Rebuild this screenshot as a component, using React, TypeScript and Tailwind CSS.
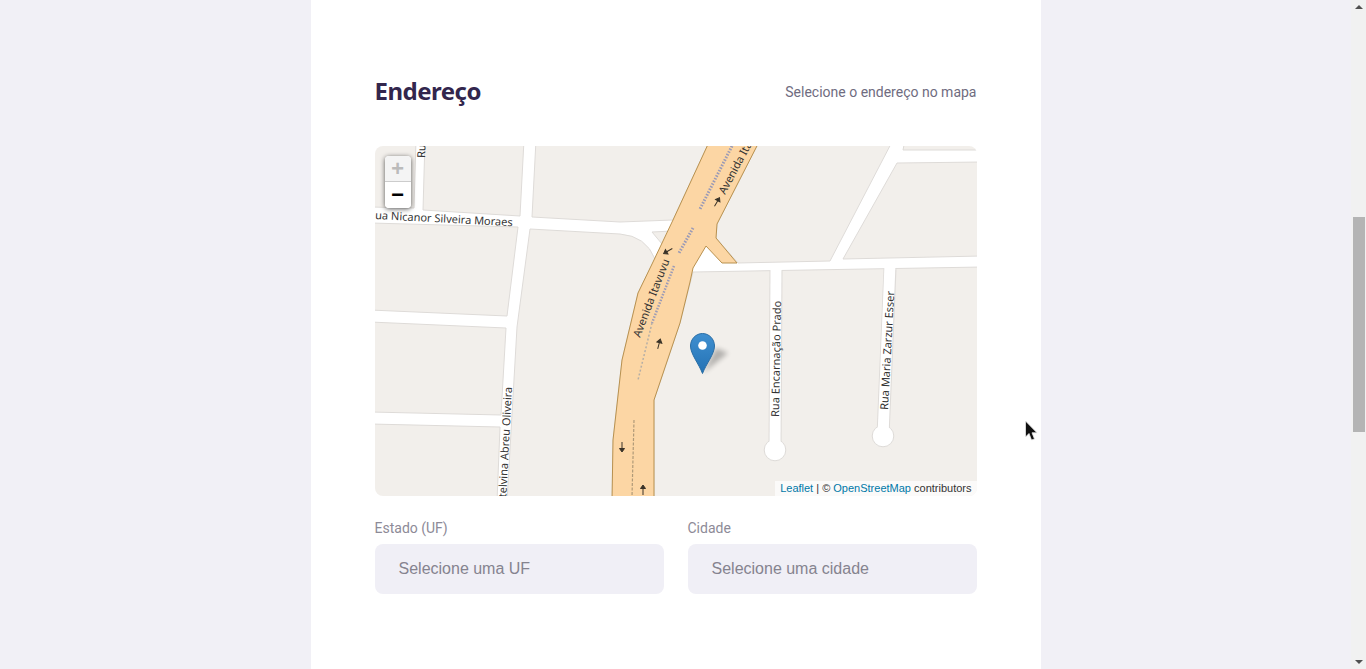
const BLOCKS = [
  '370,140 416,140 414,208 370,207',
  '425,140 524,140 520,216 423,210',
  '370,223 518,227 507,316 370,310',
  '370,322 506,328 501,415 370,412',
  '370,424 500,427 497,502 370,502',
  '536,140 710,140 673,220 620,222 532,217',
  '760,140 893,140 830,261 738,263 716,238 717,224',
  '905,140 982,140 982,150 903,150',
  '897,163 982,162 982,256 843,259',
];

const LABELS = [
  { text: 'Ru', x: 425, y: 158, rotate: -88, anchor: 'start' },
  { text: 'ua Nicanor Silveira Moraes', x: 375, y: 219, rotate: 3, anchor: 'start' },
  { text: 'Avenida Itavuvu', x: 640, y: 338, rotate: -69, anchor: 'start' },
  { text: 'Avenida Itavuvu', x: 725, y: 195, rotate: -62, anchor: 'start' },
  { text: 'telvina Abreu Oliveira', x: 512, y: 387, rotate: -87, anchor: 'end' },
  { text: 'Rua Encarnação Prado', x: 779, y: 417, rotate: -89, anchor: 'start' },
  { text: 'Rua Maria Zarzur Esser', x: 888, y: 410, rotate: -87, anchor: 'start' },
];

const ARROWS = [
  { x: 622, y: 447, rotate: 180 },
  { x: 643, y: 490, rotate: 0 },
  { x: 659, y: 344, rotate: 15 },
  { x: 717, y: 202, rotate: 30 },
  { x: 668, y: 251, rotate: 240 },
];

function StreetMap() {
  return (
    <svg viewBox="375 146 602 350" className="block w-full h-full bg-white">
      <defs>
        <linearGradient id="pin" x1="0" y1="0" x2="0" y2="1">
          <stop offset="0" stopColor="#3f8fd0" />
          <stop offset="1" stopColor="#2472b4" />
        </linearGradient>
        <filter id="blur" x="-60%" y="-60%" width="220%" height="220%">
          <feGaussianBlur stdDeviation="2.6" />
        </filter>
      </defs>

      {BLOCKS.map(points => (
        <polygon key={points} points={points} fill="#f2efeb" stroke="#dedbd8" strokeWidth="1" />
      ))}

      {/* big block west of the avenue */}
      <path
        d="M530 229 L620 234 Q646 236 655 259 L638 293 L622 360 L613 440 L612 502 L507 502 L517 327 Z"
        fill="#f2efeb"
        stroke="#dedbd8"
      />

      {/* big block east of the avenue, with the two dead ends */}
      <polygon points="693,272 982,267 982,502 654,502 654,400 680,323" fill="#f2efeb" stroke="#dedbd8" />
      <path d="M776 271 L775 450" stroke="#dedbd8" strokeWidth="13" fill="none" />
      <path d="M890 269 L883 436" stroke="#dedbd8" strokeWidth="13" fill="none" />
      <circle cx="775" cy="450" r="10.8" fill="white" stroke="#dedbd8" />
      <circle cx="883" cy="436" r="10.8" fill="white" stroke="#dedbd8" />
      <path d="M776 266 L775 450" stroke="white" strokeWidth="11" fill="none" />
      <path d="M890 264 L883 436" stroke="white" strokeWidth="11" fill="none" />

      {/* avenue */}
      <polygon points="652,232 673,231 662,244" fill="#f2efeb" stroke="#dedbd8" />
      <polygon
        points="710,140 673,220 653,262 638,293 622,360 613,440 612,502 654,502 654,400 680,323 690,282 693,268 706,246 722,263 737,263 716,238 717,224 760,140"
        fill="#fcd6a4"
        stroke="#b8914f"
        strokeWidth="1"
      />
      <path d="M732 146 L700 209" stroke="#9a9ab6" strokeWidth="3" strokeDasharray="1.5 1.5" fill="none" />
      <path d="M693 228 L679 253" stroke="#9a9ab6" strokeWidth="3" strokeDasharray="1.5 1.5" fill="none" />
      <path d="M674 266 L652 323" stroke="#9a9ab6" strokeWidth="2.5" strokeDasharray="1.5 1.5" fill="none" />
      <path d="M652 323 L638 380" stroke="#b5aea6" strokeWidth="1.5" strokeDasharray="2 2" fill="none" />
      <path d="M634 420 L632 496" stroke="#b09a78" strokeWidth="1.2" strokeDasharray="3 1.5" fill="none" />

      {ARROWS.map(a => (
        <path
          key={a.x}
          d="M0 5 L0 -3 M-2.5 -1.5 L0 -5 L2.5 -1.5 Z"
          transform={`translate(${a.x} ${a.y}) rotate(${a.rotate})`}
          stroke="#3a3328"
          strokeWidth="1"
          fill="#3a3328"
        />
      ))}

      {LABELS.map(l => (
        <text
          key={l.x}
          x={l.x}
          y={l.y}
          textAnchor={l.anchor as 'start' | 'end'}
          transform={`rotate(${l.rotate} ${l.x} ${l.y})`}
          fontFamily="'Noto Sans', sans-serif"
          fontSize="11"
          fill="#333"
        >
          {l.text}
        </text>
      ))}

      {/* marker */}
      <polygon points="703,373 716,348 728,353" fill="#000" opacity="0.26" filter="url(#blur)" />
      <path
        d="M702.5 373.5 C699 364 690.5 354 690.5 346 C690.5 339 696 333.5 702.5 333.5 C709 333.5 714.5 339 714.5 346 C714.5 354 706 364 702.5 373.5 Z"
        fill="url(#pin)"
        stroke="#2a6ea6"
        strokeWidth="1"
      />
      <circle cx="702.5" cy="345.5" r="4.3" fill="white" />
    </svg>
  );
}

function ZoomControl() {
  return (
    <div className="absolute left-[10px] top-[10px] w-[26px] rounded-[4px] bg-white shadow-[0_1px_5px_rgba(0,0,0,0.65)] overflow-hidden font-['Liberation_Mono',monospace] font-bold text-[22px] text-center">
      <div className="h-[26px] leading-[30px] bg-[#f4f4f4] text-[#bbbbbb] border-b border-[#cccccc]">+</div>
      <div className="h-[26px] leading-[30px] bg-white text-black">−</div>
    </div>
  );
}

function Field({ label, placeholder }: { label: string; placeholder: string }) {
  return (
    <div className="flex flex-col">
      <span className="h-5 mb-1.5 text-sm leading-5 text-[#8d8a97]">{label}</span>
      <div className="h-[50px] rounded-lg bg-[#f0eff6] pl-6 flex items-center text-base text-[#85838f] font-['Liberation_Sans',sans-serif]">
        {placeholder}
      </div>
    </div>
  );
}

export default function App() {
  return (
    <div className="relative h-[669px] flex overflow-hidden bg-[#f1f0f6] font-['Roboto',sans-serif]">
      <div className="flex-1 flex justify-center">
        <main className="w-[730px] h-full bg-white px-16 pt-[76px]">
          <header className="h-[30px] mb-10 flex items-center justify-between">
            <h1 className="text-2xl font-bold tracking-[-0.5px] text-[#32264d] font-['Noto_Sans',sans-serif]">Endereço</h1>
            <span className="pt-0.5 text-sm text-[#6f6c80]">Selecione o endereço no mapa</span>
          </header>

          <div className="relative h-[350px] rounded-lg overflow-hidden">
            <StreetMap />
            <ZoomControl />
            <div className="absolute right-0 bottom-0 h-[15px] px-[5px] leading-[15px] bg-white/70 text-[11px] text-[#333333] font-['Liberation_Sans',sans-serif]">
              <span className="text-[#0078a8]">Leaflet</span> | © <span className="text-[#0078a8]">OpenStreetMap</span> contributors
            </div>
          </div>

          <div className="mt-[22px] grid grid-cols-2 gap-6">
            <Field label="Estado (UF)" placeholder="Selecione uma UF" />
            <Field label="Cidade" placeholder="Selecione uma cidade" />
          </div>
        </main>
      </div>

      {/* scrollbar */}
      <div className="w-[15px] h-full bg-[#f1f1f1] flex flex-col items-center pt-[5px] pb-[5px] pl-px">
        <div className="w-0 h-0 border-x-[4px] border-x-transparent border-b-[4px] border-b-[#505050]" />
        <div className="w-[12px] h-[215px] mt-[208px] bg-[#b4b4b4]" />
        <div className="flex-1" />
        <div className="w-0 h-0 border-x-[4px] border-x-transparent border-t-[4px] border-t-[#505050]" />
      </div>

      {/* mouse pointer */}
      <svg className="absolute left-[1024px] top-[420px]" width="15" height="22" viewBox="0 0 15 22">
        <path d="M1.5 1 L1.5 17 L5 13.5 L7.5 20 L10.5 19 L8 12.8 L13 12.8 Z" fill="#111" stroke="#e8e8e8" strokeWidth="0.8" />
      </svg>
    </div>
  );
}
